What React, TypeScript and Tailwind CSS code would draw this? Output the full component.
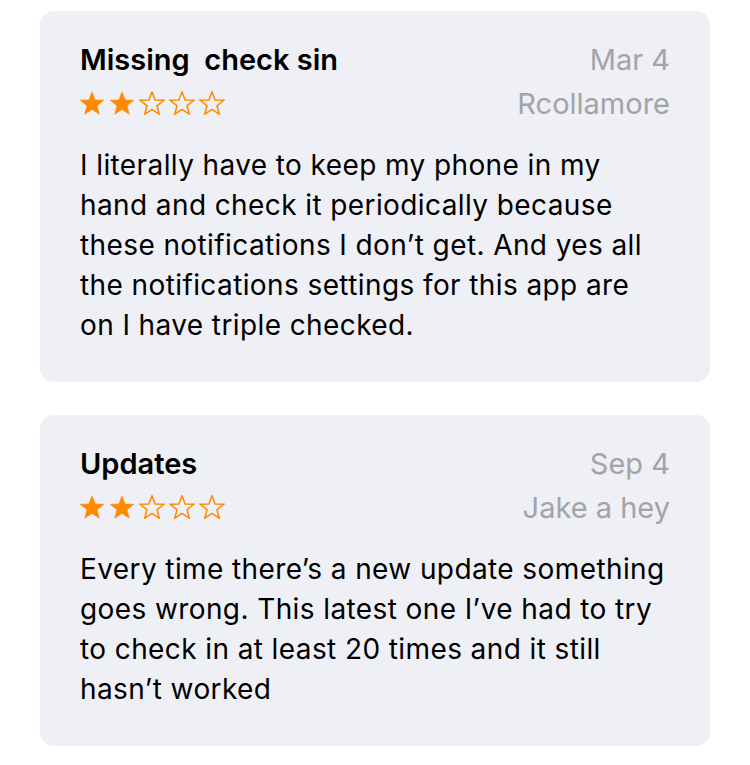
const reviews = [
  {
    title: "Missing  check sin",
    date: "Mar 4",
    author: "Rcollamore",
    rating: 2,
    body: "I literally have to keep my phone in my hand and check it periodically because these notifications I don’t get. And yes all the notifications settings for this app are on I have triple checked.",
  },
  {
    title: "Updates",
    date: "Sep 4",
    author: "Jake a hey",
    rating: 2,
    body: "Every time there’s a new update something goes wrong. This latest one I’ve had to try to check in at least 20 times and it still hasn’t worked",
  },
];

function Star({ filled }: { filled: boolean }) {
  return (
    <svg width="26" height="24" viewBox="0 0 26 24">
      <path
        d="M13 0.8 L16.1 8.9 L24.8 9.3 L18 14.8 L20.3 23.2 L13 18.4 L5.7 23.2 L8 14.8 L1.2 9.3 L9.9 8.9 Z"
        fill={filled ? "#ff8a00" : "none"}
        stroke="#ff8a00"
        strokeWidth={filled ? 0.6 : 1.5}
        strokeLinejoin="miter"
      />
    </svg>
  );
}

export default function App() {
  return (
    <div
      className="min-h-screen bg-white px-10 pt-[11px] pb-6 flex flex-col gap-[33px]"
      style={{ fontFamily: "Inter, 'Noto Sans', sans-serif" }}
    >
      {reviews.map((r, idx) => (
        <div
          key={idx}
          className="rounded-[14px] bg-[#efeff6] px-10 pt-[33px] pb-[37px]"
        >
          <div className="flex justify-between">
            <div>
              <div className="whitespace-pre text-[29px] leading-8 font-semibold text-black">
                {r.title}
              </div>
              <div className="mt-[15px] flex gap-1 -ml-[1px]">
                {[0, 1, 2, 3, 4].map((i) => (
                  <Star key={i} filled={i < r.rating} />
                ))}
              </div>
            </div>
            <div className="text-right text-[29px] leading-8 text-[#a3a3a8]">
              <div>{r.date}</div>
              <div className="mt-3">{r.author}</div>
            </div>
          </div>
          <p className="mt-[25px] text-[28px] leading-10 tracking-[0.4px] text-black">
            {r.body}
          </p>
        </div>
      ))}
    </div>
  );
}
